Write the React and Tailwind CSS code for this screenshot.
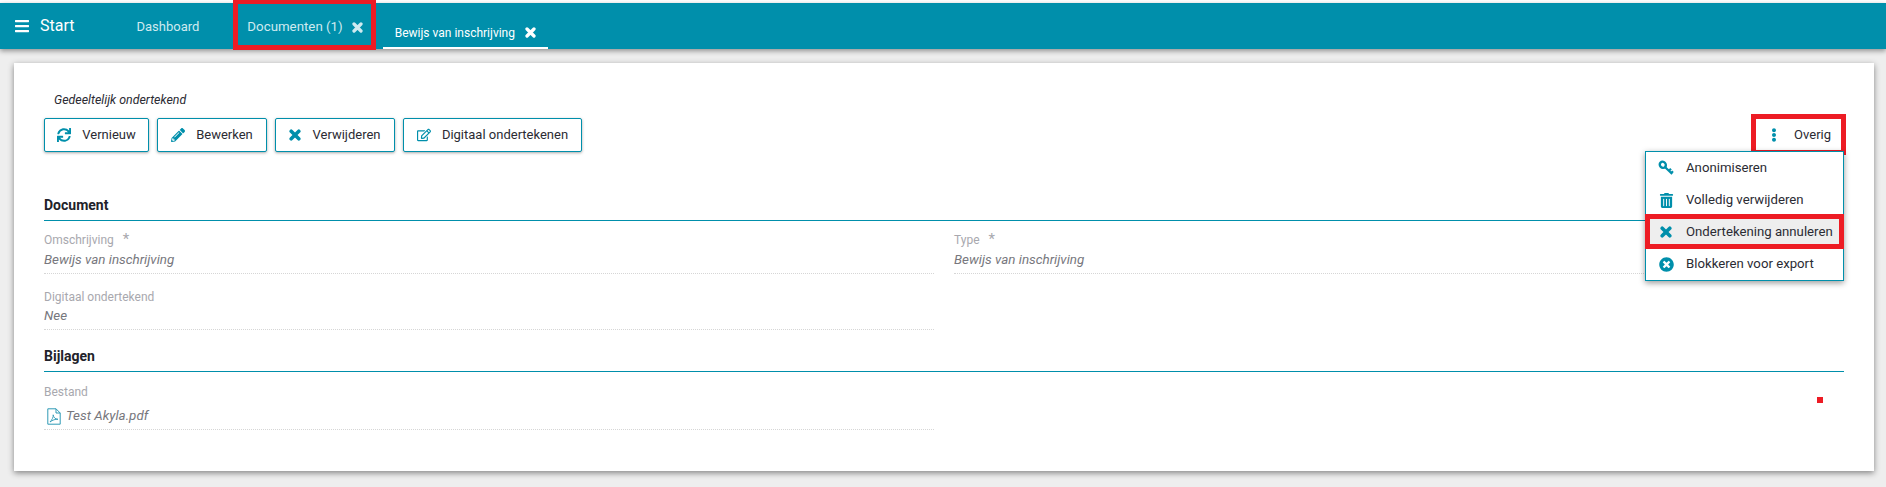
import React from "react";
import { FaBars, FaSync, FaPencilAlt, FaRegEdit, FaTrashAlt, FaTimesCircle, FaEllipsisV } from "react-icons/fa";

function XIcon({ size = 11, className = "" }) {
  return (
    <svg width={size} height={size} viewBox="0 0 12 12" className={className}>
      <path d="M2.2 2.2 L9.8 9.8 M9.8 2.2 L2.2 9.8" stroke="currentColor" strokeWidth="3.6" strokeLinecap="round" fill="none" />
    </svg>
  );
}

function KeyIcon() {
  return (
    <svg width="16" height="16" viewBox="0 0 16 16" fill="none" stroke="currentColor">
      <ellipse cx="4.8" cy="4.8" rx="3.2" ry="2.9" strokeWidth="2.4" transform="rotate(45 4.8 4.8)" />
      <path d="M7.2 7.2 L14.2 14 M11 10.8 L13 8.8 M13.2 13 L15 11.2" strokeWidth="2.2" />
    </svg>
  );
}

function PdfIcon() {
  return (
    <svg width="14" height="17" viewBox="0 0 14 17" fill="none" stroke="#2f9ab5" strokeWidth="1" className="mr-[5px] ml-[3px]">
      <path d="M0.8 0.8 H9 L13.2 5 V16.2 H0.8 Z" />
      <path d="M9 0.8 V5 H13.2" />
      <path d="M3 14 C5 12 6.5 9 6.2 6.8 C6.6 9.5 8 11 11 11.3 C8.5 11 5.5 12 3 14 Z" strokeWidth="0.9" />
    </svg>
  );
}

function Btn({ icon, label, width }) {
  return (
    <button className={`${width} h-[34px] flex items-center justify-center gap-[11px] bg-white border border-[#008fab] rounded-[2px] shadow-[0_1px_3px_rgba(0,0,0,0.35)] text-[13px] text-[#2b2b33]`}>
      <span className="text-[#008fab] text-[14px]">{icon}</span>
      {label}
    </button>
  );
}

function Heading({ children, className }) {
  return (
    <div className={`h-[26px] border-b border-[#008fab] text-[14px] leading-[20px] font-bold text-[#22222a] ${className}`}>{children}</div>
  );
}

function Field({ label, star, value, icon, gap }) {
  return (
    <div className="border-b border-dotted border-[#d6d6d6] pb-[3px]">
      <div className="h-[16px] text-[12px] leading-[16px] text-[#a8a8ae] flex items-start">
        <span>{label}</span>
        {star && <span className="ml-[9px] text-[15px] leading-[14px]">*</span>}
      </div>
      <div className={`${gap} h-[20px] text-[13.4px] leading-[20px] italic text-[#77777d] flex items-center`}>
        {icon}
        {value}
      </div>
    </div>
  );
}

function MenuItem({ icon, label, active }) {
  return (
    <div className="relative h-[32px] flex items-center text-[13.2px] text-[#2b2b33]">
      {active && <div className="absolute -left-px -right-px top-[-2px] h-[35px] bg-[#eeeeee] border-[5px] border-[#ed1c24]"></div>}
      <span className="relative w-[40px] flex justify-center text-[#008fab] text-[15px]">{icon}</span>
      <span className="relative">{label}</span>
    </div>
  );
}

export default function App() {
  return (
    <div className="w-[1886px] h-[487px] overflow-hidden bg-[#eeeeee] pt-[3px] font-['Roboto',sans-serif] relative">
      <div className="absolute top-0 left-0 w-full h-[3px] bg-white"></div>
      <nav className="relative h-[46px] bg-[#008fab] shadow-[0_2px_5px_rgba(0,0,0,0.4)] flex items-center text-white">
        <FaBars className="ml-[14px] text-[16px]" />
        <span className="ml-[10px] text-[16px] whitespace-nowrap">Start</span>
        <span className="ml-[62px] text-[13px] text-[#cfeaf0] mt-[2px] whitespace-nowrap">Dashboard</span>
        <div className="relative ml-[48px] flex items-center text-[13.3px] text-[#cfeaf0] mt-[2px] whitespace-nowrap">
          <span>Documenten (1)</span>
          <XIcon className="ml-[9px]" />
          <div className="absolute left-[-14px] top-[-18px] w-[143px] h-[51px] border-[5px] border-[#ed1c24]"></div>
        </div>
        <div className="ml-[20px] self-end h-[38px] w-[165px] border-b-2 border-white flex items-center pl-[12px] pt-[7px] gap-[10px] text-[12px] whitespace-nowrap">
          <span>Bewijs van inschrijving</span>
          <XIcon />
        </div>
      </nav>
      <main className="relative mt-[14px] ml-[14px] mr-[12px] h-[408px] bg-white shadow-[0_2px_6px_rgba(0,0,0,0.45)] pt-[29px] px-[30px]">
        <div className="h-[16px] ml-[10px] text-[12.4px] leading-[16px] italic text-[#2b2b33]">Gedeeltelijk ondertekend</div>
        <div className="mt-[10px] flex gap-[8px] items-center">
          <Btn width="w-[105px]" icon={<FaSync />} label="Vernieuw" />
          <Btn width="w-[110px]" icon={<FaPencilAlt />} label="Bewerken" />
          <Btn width="w-[120px]" icon={<XIcon size={12} />} label="Verwijderen" />
          <Btn width="w-[179px]" icon={<FaRegEdit />} label="Digitaal ondertekenen" />
          <div className="relative ml-auto mr-[13px] flex items-center gap-[13px] text-[13px] text-[#2b2b33]">
            <FaEllipsisV className="text-[#008fab] text-[14px]" />
            Overig
            <div className="absolute left-[-16px] top-[-11px] w-[95px] h-[41px] border-[5px] border-[#ed1c24]"></div>
          </div>
        </div>
        <Heading className="mt-[43px]">Document</Heading>
        <div className="grid grid-cols-2 gap-x-[20px] gap-y-[15px] pt-[11px]">
          <Field label="Omschrijving" star value="Bewijs van inschrijving" gap="mt-[2px]" />
          <Field label="Type" star value="Bewijs van inschrijving" gap="mt-[2px]" />
          <Field label="Digitaal ondertekend" value="Nee" gap="mt-[1px]" />
        </div>
        <Heading className="mt-[16px]">Bijlagen</Heading>
        <div className="grid grid-cols-2 gap-x-[20px] pt-[12px]">
          <Field label="Bestand" value="Test Akyla.pdf" gap="mt-[6px]" icon={<PdfIcon />} />
        </div>
        <div className="absolute left-[1803px] top-[334px] w-[6px] h-[6px] bg-[#ed1c24]"></div>
        <div className="absolute right-[30px] top-[88px] w-[199px] h-[130px] bg-white border border-[#008fab] shadow-[0_2px_6px_rgba(0,0,0,0.4)]">
          <MenuItem icon={<KeyIcon />} label="Anonimiseren" />
          <MenuItem icon={<FaTrashAlt />} label="Volledig verwijderen" />
          <MenuItem icon={<XIcon size={12} />} label="Ondertekening annuleren" active />
          <MenuItem icon={<FaTimesCircle />} label="Blokkeren voor export" />
        </div>
      </main>
    </div>
  );
}
